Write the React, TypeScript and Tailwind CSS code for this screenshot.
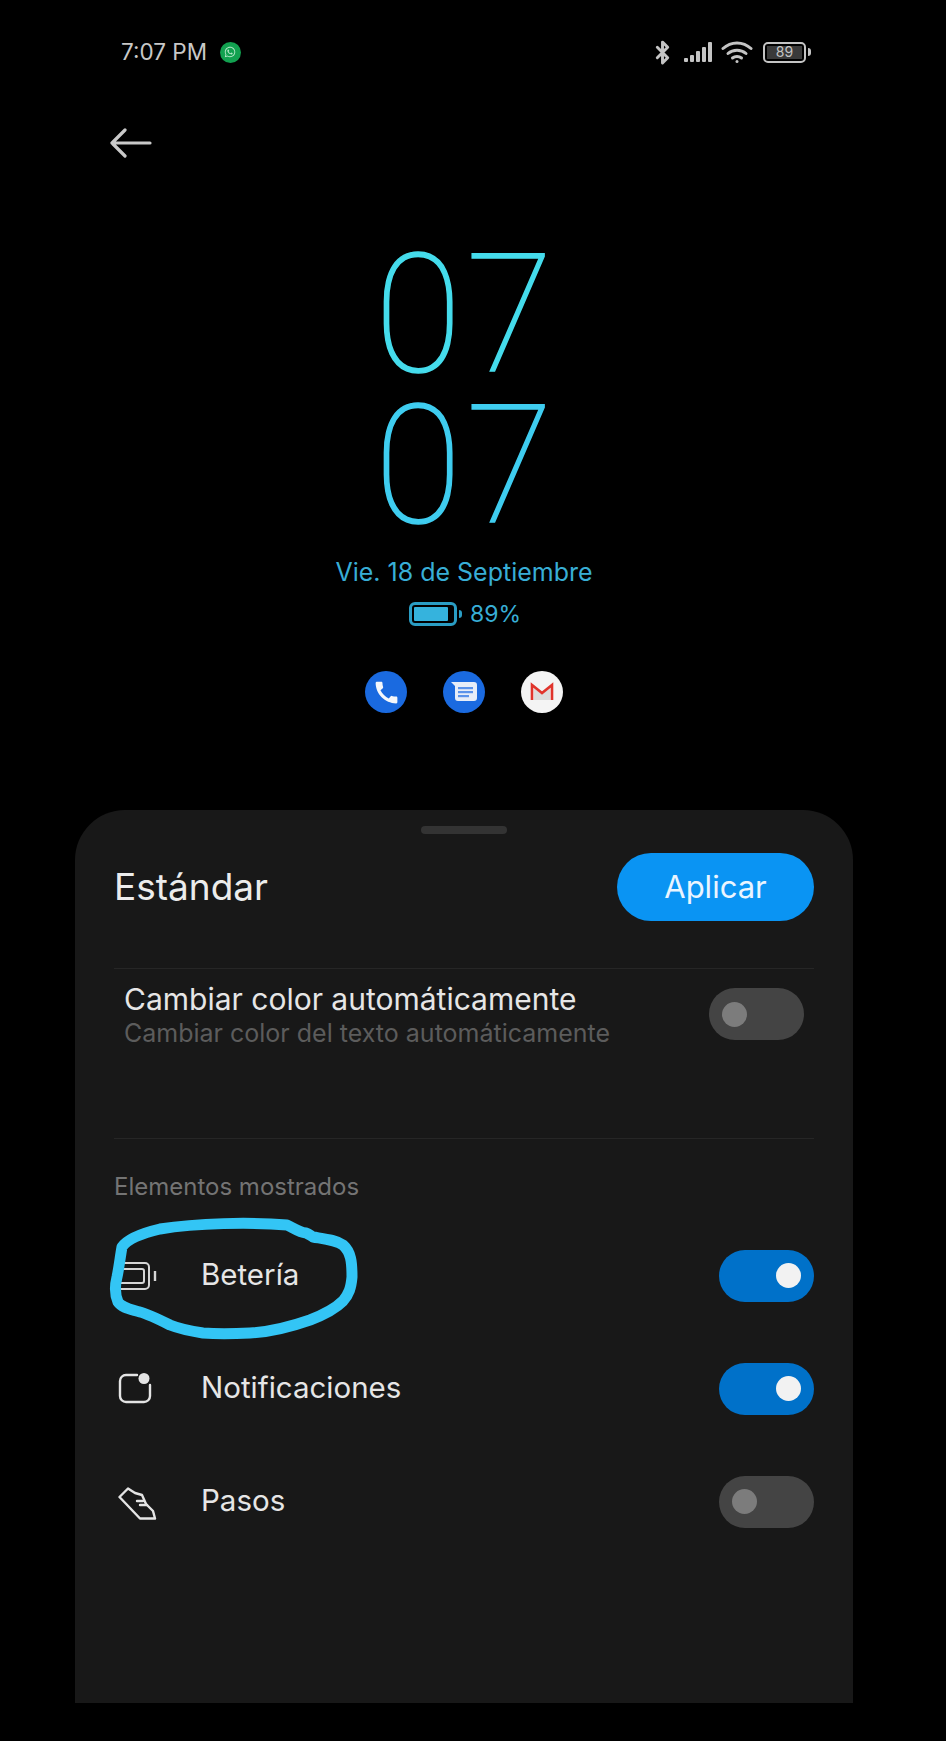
import { Bluetooth } from "lucide-react";
import { FaWhatsapp } from "react-icons/fa";
import { MdCall } from "react-icons/md";

const font = "font-['Inter',sans-serif]";

function Toggle({ on, className = "" }: { on: boolean; className?: string }) {
  return (
    <div
      className={`flex h-[52px] w-[95px] items-center rounded-full px-[13px] ${
        on ? "justify-end bg-[#0071c9]" : "justify-start bg-[#444444]"
      } ${className}`}
    >
      <div className={`h-[25px] w-[25px] rounded-full ${on ? "bg-[#f2f2f2]" : "bg-[#7c7c7c]"}`} />
    </div>
  );
}

function StatusBar() {
  return (
    <div className="flex h-[52px] items-center justify-between pl-[121px] pr-[135px]">
      <div className="flex items-center gap-[13px]">
        <span className="text-[22.5px] text-[#c8c8c8]">7:07 PM</span>
        <div className="flex h-[21px] w-[21px] items-center justify-center rounded-full bg-[#12a150]">
          <FaWhatsapp className="h-[12px] w-[12px] text-[#b5e8c9]" />
        </div>
      </div>
      <div className="flex items-center gap-[8px] text-[#c4c4c4]">
        <Bluetooth className="h-[25px] w-[25px]" strokeWidth={2.8} />
        <svg width="30" height="22" viewBox="0 0 30 22" fill="currentColor">
          <rect x="1" y="17" width="4" height="4" rx="1" />
          <rect x="7" y="14" width="4" height="7" rx="1" />
          <rect x="13" y="10" width="4" height="11" rx="1" />
          <rect x="19" y="6" width="4" height="15" rx="1" />
          <rect x="25" y="1" width="4" height="20" rx="1" />
        </svg>
        <svg width="32" height="24" viewBox="0 0 32 24" fill="none" stroke="currentColor" strokeWidth="3" strokeLinecap="round">
          <path d="M2 8.5C10 1 22 1 30 8.5" />
          <path d="M7 13.5C12 9 20 9 25 13.5" />
          <path d="M11.5 18C14 16 18 16 20.5 18" />
          <circle cx="16" cy="21.5" r="1.5" fill="currentColor" stroke="none" />
        </svg>
        <div className="ml-[2px] flex items-center gap-[2px]">
          <div className="flex h-[21px] w-[43px] items-center justify-center rounded-[5px] border-[2px] border-[#c4c4c4] p-[2px]">
            <div className="flex h-full w-full items-center justify-center bg-[#3a3a3a] text-[14px] leading-none text-[#c4c4c4]">89</div>
          </div>
          <div className="h-[8px] w-[3px] rounded-r-sm bg-[#c4c4c4]" />
        </div>
      </div>
    </div>
  );
}

function Clock() {
  return (
    <div className="flex flex-col items-center pl-[4px] pt-[80px] font-['Roboto',sans-serif]">
      <div className="scale-x-[0.96] text-[165px] font-thin leading-[151px] tracking-[5px] text-[#45dcec] [-webkit-text-stroke:1.5px_#45dcec]">07</div>
      <div className="scale-x-[0.96] text-[165px] font-thin leading-[151px] tracking-[5px] text-[#3fcdf0] [-webkit-text-stroke:1.5px_#3fcdf0]">07</div>
    </div>
  );
}

function AppIcons() {
  return (
    <div className="flex items-center justify-center gap-[36px] pt-[42px]">
      <div className="flex h-[42px] w-[42px] items-center justify-center rounded-full bg-[#1a6ae0]">
        <MdCall className="h-[29px] w-[29px] text-[#f4f7fb]" />
      </div>
      <div className="flex h-[42px] w-[42px] items-center justify-center rounded-full bg-[#1a6ae0]">
        <svg width="28" height="24" viewBox="0 0 28 24">
          <path d="M1 2h23a3 3 0 0 1 3 3v13a3 3 0 0 1-3 3H8a3 3 0 0 1-3-3V6z" fill="#e6edf8" />
          <rect x="8" y="7" width="15" height="2.2" fill="#5b93ea" />
          <rect x="8" y="11" width="15" height="2.2" fill="#5b93ea" />
          <rect x="8" y="15" width="11" height="2.2" fill="#5b93ea" />
        </svg>
      </div>
      <div className="flex h-[42px] w-[42px] items-center justify-center rounded-full bg-[#f4f4f4]">
        <svg width="26" height="20" viewBox="0 0 26 20" fill="none">
          <path d="M5 18V6L13 12.500L21 6V18z" fill="#dcdcdc" />
          <path d="M3 18V3L13 11L23 3V18" stroke="#e0342c" strokeWidth="2.600" />
        </svg>
      </div>
    </div>
  );
}

function ShoeIcon() {
  return (
    <svg width="40" height="36" viewBox="0 0 40 36" fill="none" stroke="#e4e4e4" strokeWidth="2.4" strokeLinejoin="round" strokeLinecap="round">
      <path d="M1.500 13L10 4.500L17 9L24 11L28 20L35 27L37 34.500H22Z" />
      <path d="M19 17H25M22 21H29" />
    </svg>
  );
}

function NotifIcon() {
  return (
    <svg width="34" height="34" viewBox="0 0 34 34" fill="none" stroke="#e4e4e4" strokeWidth="2.4" strokeLinecap="round">
      <path d="M19 3H8a6 6 0 0 0-6 6v15a6 6 0 0 0 6 6h18a6 6 0 0 0 6-6V13" />
      <circle cx="26" cy="6.500" r="5.500" fill="#e4e4e4" stroke="none" />
    </svg>
  );
}

function BatteryOutline() {
  return (
    <svg width="40" height="28" viewBox="0 0 40 28" fill="none" stroke="#d6d6d6" strokeWidth="2">
      <path d="M1 1H27a4 4 0 0 1 4 4V23a4 4 0 0 1-4 4H1" />
      <path d="M1 7H24a2 2 0 0 1 2 2V19a2 2 0 0 1-2 2H1" />
      <path d="M37 9V19" strokeWidth="2.400" />
    </svg>
  );
}

function ItemRow({ icon, label, on }: { icon: React.ReactNode; label: string; on: boolean }) {
  return (
    <div className="flex h-[113px] items-center justify-between">
      <div className="flex items-center">
        <div className="flex w-[87px] items-center pl-[4px]">{icon}</div>
        <span className="mb-[3px] text-[29.5px] text-[#e6e6e6]">{label}</span>
      </div>
      <Toggle on={on} />
    </div>
  );
}

export default function App() {
  return (
    <div className={`relative flex h-[1741px] w-[946px] flex-col overflow-hidden bg-black ${font}`}>
      <div className="h-[26px] shrink-0" />
      <StatusBar />
      <div className="flex h-[81px] items-end pl-[110px]">
        <svg width="42" height="32" viewBox="0 0 42 32" fill="none" stroke="#c9c9c9" strokeWidth="3.200" strokeLinecap="round" strokeLinejoin="round">
          <path d="M40 16H2M15 3L2 16L15 29" />
        </svg>
      </div>
      {/* the preview column sits a bit left of the page centre, same as the sheet */}
      <div className="w-[928px]">
        <Clock />
        <div className="mt-[16px] text-center text-[25px] leading-[30px] text-[#38aed6]">Vie. 18 de Septiembre</div>
        <div className="mt-[12px] flex items-center justify-center gap-[8px] pl-[2px]">
          <div className="flex items-center gap-[2px]">
            <div className="flex h-[24px] w-[48px] items-center rounded-[6px] border-[3px] border-[#2a9dc4] p-[2px]">
              <div className="h-full w-[34px] rounded-[1px] bg-[#35b3dd]" />
            </div>
            <div className="h-[8px] w-[3px] rounded-r-sm bg-[#2a9dc4]" />
          </div>
          <span className="text-[23px] leading-[30px] text-[#38aed6]">89%</span>
        </div>
        <AppIcons />
      </div>

      <div className="ml-[75px] mr-[93px] mt-[97px] h-[893px] shrink-0 rounded-t-[50px] bg-[#181818] px-[39px]">
        <div className="flex justify-center pt-[16px]">
          <div className="h-[8px] w-[86px] rounded-full bg-[#333333]" />
        </div>
        <div className="mt-[19px] flex h-[68px] items-center justify-between">
          <span className="text-[37px] text-[#ececec]">Estándar</span>
          <div className="flex h-[68px] w-[197px] items-center justify-center rounded-full bg-[#0a94f3] text-[31px] text-[#eaf5ff]">
            Aplicar
          </div>
        </div>
        <div className="mt-[47px] border-t border-[#262626]" />
        <div className="flex items-start justify-between pl-[10px] pr-[10px] pt-[12px]">
          <div>
            <div className="text-[30px] leading-[36px] text-[#e6e6e6]">Cambiar color automáticamente</div>
            <div className="pt-[1px] text-[25px] leading-[30px] text-[#5c5c5c]">Cambiar color del texto automáticamente</div>
          </div>
          <Toggle on={false} className="mt-[7px]" />
        </div>
        <div className="mt-[90px] border-t border-[#262626]" />
        <div className="pt-[33px] text-[24px] leading-[30px] text-[#747474]">Elementos mostrados</div>
        <div className="mt-[17px]">
          <ItemRow icon={<BatteryOutline />} label="Betería" on />
          <ItemRow icon={<NotifIcon />} label="Notificaciones" on />
          <ItemRow icon={<ShoeIcon />} label="Pasos" on={false} />
        </div>
      </div>

      {/* hand drawn circle over the first row */}
      <svg className="absolute left-[100px] top-[1210px]" width="270" height="135" viewBox="100 1210 270 135" fill="none">
        <path
          d="M122 1247C128 1238 143 1233 160 1229C197 1223 250 1222 287 1225C294 1228 298 1232 306 1233C309 1234 311 1236 313 1237C325 1239 336 1240 343 1245C351 1252 352 1262 352 1277C351 1288 349 1294 343 1301C335 1309 323 1315 310 1320C290 1327 270 1332 250 1333C232 1334 215 1334 203 1333C190 1331 180 1329 170 1325C158 1319 148 1314 140 1312C130 1309 122 1308 118 1302C115 1295 115 1285 117 1277C119 1268 120 1258 122 1247Z"
          stroke="#33c5f5"
          strokeWidth="11"
          strokeLinejoin="round"
        />
      </svg>
    </div>
  );
}
